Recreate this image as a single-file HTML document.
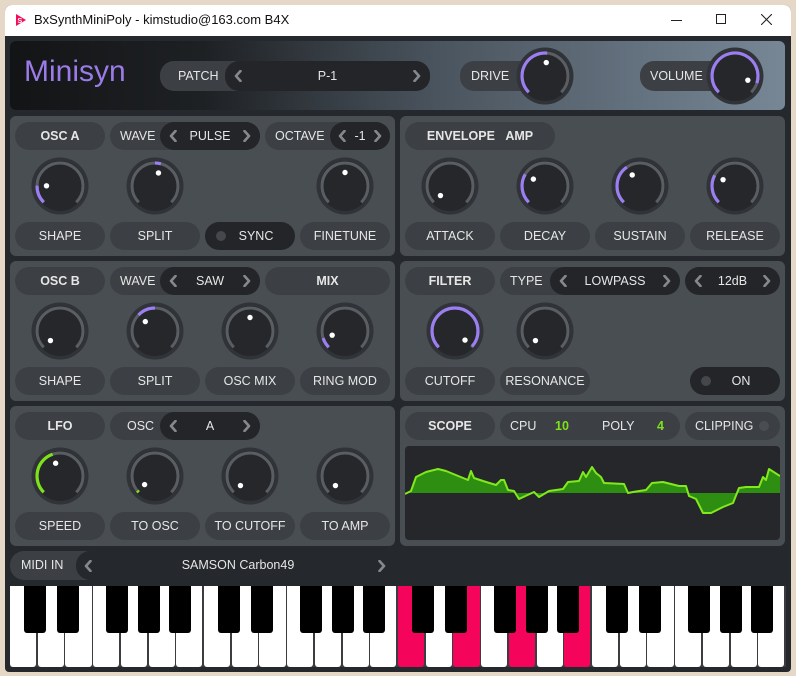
<!DOCTYPE html>
<html><head><meta charset="utf-8"><style>
*{margin:0;padding:0;box-sizing:border-box}
body{width:796px;height:676px;background:#e6d8c6;position:relative;overflow:hidden;font-family:"Liberation Sans",sans-serif;color:#e8e8e8}
.abs{position:absolute}
.win{left:5px;top:5px;width:786px;height:667px;background:#25282c;border-radius:7px 7px 4px 4px;overflow:hidden}
.title{left:5px;top:5px;width:786px;height:31px;background:#fff;border-radius:7px 7px 0 0;color:#111;font-size:13px}
.panel{background:#494e52;border-radius:6px}
.pill{position:absolute;height:28px;border-radius:14px;background:#3c4044;font-size:12.5px;line-height:28px;text-align:center;color:#e6e6e6}
.dark{background:#232529}
.b{font-weight:bold}
.chev{position:absolute;top:50%;margin-top:-6px;width:8px;height:12px;font-size:0;line-height:0}
.chev svg{display:block}
</style></head><body>
<div class="abs win"></div>
<div class="abs title">
  <svg class="abs" style="left:10px;top:8px" width="12" height="14"><path d="M1 1 L11 7 L1 13Z" fill="#f0105a"/><text x="2.5" y="10" font-size="7" fill="#fff" font-family="Liberation Sans" font-weight="bold">S</text></svg>
  <div class="abs" style="left:29px;top:7px">BxSynthMiniPoly - kimstudio@163.com B4X</div>
  <div class="abs" style="left:666px;top:15px;width:11px;height:1px;background:#222"></div>
  <div class="abs" style="left:711px;top:9px;width:10px;height:10px;border:1px solid #222"></div>
  <svg class="abs" style="left:756px;top:9px" width="11" height="11"><path d="M0 0L11 11M11 0L0 11" stroke="#222" stroke-width="1.1"/></svg>
</div>
<div class="abs" style="left:10px;top:41px;width:775px;height:69px;border-radius:6px;background:linear-gradient(90deg,#131416 0%,#1e2124 25%,#4a545e 55%,#778796 100%)"></div>
<div class="abs" style="left:24px;top:55px;font-size:30px;color:#9b7be8">Minisyn</div>
<div class="pill" style="left:160px;top:61px;width:270px;height:30px;line-height:30px;text-align:left;padding-left:18px">PATCH</div>
<div class="pill dark" style="left:225px;top:61px;width:205px;height:30px;line-height:30px">P-1<span class="chev L" style="left:9px"></span><span class="chev R" style="right:9px"></span></div>
<div class="pill" style="left:460px;top:61px;width:80px;height:30px;line-height:30px;text-align:left;padding-left:11px">DRIVE</div>
<div class="pill" style="left:640px;top:61px;width:90px;height:30px;line-height:30px;text-align:left;padding-left:10px">VOLUME</div>

<div class="abs panel" style="left:10px;top:116px;width:385px;height:140px"></div>
<div class="abs panel" style="left:400px;top:116px;width:385px;height:140px"></div>
<div class="abs panel" style="left:10px;top:261px;width:385px;height:140px"></div>
<div class="abs panel" style="left:400px;top:261px;width:385px;height:140px"></div>
<div class="abs panel" style="left:10px;top:406px;width:385px;height:140px"></div>
<div class="abs panel" style="left:400px;top:406px;width:385px;height:140px"></div>

<div class="pill b" style="left:15px;top:122px;width:90px">OSC A</div>
<div class="pill" style="left:110px;top:122px;width:150px;text-align:left;padding-left:10px">WAVE</div>
<div class="pill dark" style="left:160px;top:122px;width:100px">PULSE<span class="chev L" style="left:9px"></span><span class="chev R" style="right:9px"></span></div>
<div class="pill" style="left:265px;top:122px;width:125px;text-align:left;padding-left:10px">OCTAVE</div>
<div class="pill dark" style="left:330px;top:122px;width:60px">-1<span class="chev L" style="left:8px"></span><span class="chev R" style="right:8px"></span></div>
<div class="pill" style="left:15px;top:222px;width:90px">SHAPE</div>
<div class="pill" style="left:110px;top:222px;width:90px">SPLIT</div>
<div class="pill dark" style="left:205px;top:222px;width:90px;padding-left:12px">SYNC<span class="abs" style="left:11px;top:9px;width:10px;height:10px;border-radius:5px;background:#44484c"></span></div>
<div class="pill" style="left:300px;top:222px;width:90px">FINETUNE</div>

<div class="pill b" style="left:405px;top:122px;width:150px">ENVELOPE&nbsp;&nbsp;&nbsp;AMP</div>
<div class="pill" style="left:405px;top:222px;width:90px">ATTACK</div>
<div class="pill" style="left:500px;top:222px;width:90px">DECAY</div>
<div class="pill" style="left:595px;top:222px;width:90px">SUSTAIN</div>
<div class="pill" style="left:690px;top:222px;width:90px">RELEASE</div>

<div class="pill b" style="left:15px;top:267px;width:90px">OSC B</div>
<div class="pill" style="left:110px;top:267px;width:150px;text-align:left;padding-left:10px">WAVE</div>
<div class="pill dark" style="left:160px;top:267px;width:100px">SAW<span class="chev L" style="left:9px"></span><span class="chev R" style="right:9px"></span></div>
<div class="pill b" style="left:265px;top:267px;width:125px">MIX</div>
<div class="pill" style="left:15px;top:367px;width:90px">SHAPE</div>
<div class="pill" style="left:110px;top:367px;width:90px">SPLIT</div>
<div class="pill" style="left:205px;top:367px;width:90px">OSC MIX</div>
<div class="pill" style="left:300px;top:367px;width:90px">RING MOD</div>

<div class="pill b" style="left:405px;top:267px;width:90px">FILTER</div>
<div class="pill" style="left:500px;top:267px;width:180px;text-align:left;padding-left:10px">TYPE</div>
<div class="pill dark" style="left:550px;top:267px;width:130px">LOWPASS<span class="chev L" style="left:9px"></span><span class="chev R" style="right:9px"></span></div>
<div class="pill dark" style="left:685px;top:267px;width:95px">12dB<span class="chev L" style="left:9px"></span><span class="chev R" style="right:9px"></span></div>
<div class="pill" style="left:405px;top:367px;width:90px">CUTOFF</div>
<div class="pill" style="left:500px;top:367px;width:90px">RESONANCE</div>
<div class="pill dark" style="left:690px;top:367px;width:90px;padding-left:12px">ON<span class="abs" style="left:11px;top:9px;width:10px;height:10px;border-radius:5px;background:#44484c"></span></div>

<div class="pill b" style="left:15px;top:412px;width:90px">LFO</div>
<div class="pill" style="left:110px;top:412px;width:150px;text-align:left;padding-left:17px">OSC</div>
<div class="pill dark" style="left:160px;top:412px;width:100px">A<span class="chev L" style="left:9px"></span><span class="chev R" style="right:9px"></span></div>
<div class="pill" style="left:15px;top:512px;width:90px">SPEED</div>
<div class="pill" style="left:110px;top:512px;width:90px">TO OSC</div>
<div class="pill" style="left:205px;top:512px;width:90px">TO CUTOFF</div>
<div class="pill" style="left:300px;top:512px;width:90px">TO AMP</div>

<div class="pill b" style="left:405px;top:412px;width:90px">SCOPE</div>
<div class="pill" style="left:500px;top:412px;width:180px;text-align:left"><span class="abs" style="left:10px">CPU</span><span class="abs b" style="left:55px;color:#7ee21a">10</span><span class="abs" style="left:102px">POLY</span><span class="abs b" style="left:157px;color:#7ee21a">4</span></div>
<div class="pill" style="left:685px;top:412px;width:95px;text-align:left;padding-left:10px">CLIPPING<span class="abs" style="left:74px;top:9px;width:10px;height:10px;border-radius:5px;background:#4a4e52"></span></div>
<svg class="abs" style="left:405px;top:446px" width="375" height="94">
<rect width="375" height="94" rx="4" fill="#25272b"/>
<path d="M0 47 L0 48 L6 45 L11 31 L21 26 L33 23 L41 25 L63 34 L66 25 L69 32 L78 35 L91 39 L96 34 L99 34 L103 44 L109 45 L112 47 L114 53 L129 46 L134 51 L144 45 L158 43 L163 36 L174 35 L178 26 L181 31 L187 21 L191 27 L196 31 L199 37 L219 38 L223 47 L228 46 L241 44 L247 37 L258 36 L274 40 L281 40 L284 50 L291 53 L298 67 L306 67 L318 61 L328 57 L334 42 L341 41 L354 41 L358 31 L361 34 L364 23 L375 30 L375 47Z" fill="#2e8e12"/>
<path d="M0 48 L6 45 L11 31 L21 26 L33 23 L41 25 L63 34 L66 25 L69 32 L78 35 L91 39 L96 34 L99 34 L103 44 L109 45 L114 53 L129 46 L134 51 L144 45 L158 43 L163 36 L174 35 L178 26 L181 31 L187 21 L191 27 L196 31 L199 37 L219 38 L223 47 L228 46 L241 44 L247 37 L258 36 L274 40 L281 40 L284 50 L291 53 L298 67 L306 67 L318 61 L328 57 L334 42 L341 41 L354 41 L358 31 L361 34 L364 23 L375 30" fill="none" stroke="#80ea1c" stroke-width="2" stroke-linejoin="round"/>
</svg>

<div class="pill" style="left:10px;top:551px;width:90px;height:29px;line-height:29px;text-align:left;padding-left:11px">MIDI IN</div>
<div class="abs" style="left:76px;top:551px;width:320px;height:29px;border-radius:14px;background:#25282c;font-size:12.5px;line-height:29px;text-align:center;color:#e6e6e6;padding-left:4px">SAMSON Carbon49<span class="chev L" style="left:8px"></span><span class="chev R" style="right:10px"></span></div>

<svg id="knobs" class="abs" style="left:0;top:0" width="796" height="676"></svg>
<div id="kb" class="abs" style="left:10px;top:586px;width:776px;height:81px;background:#3a3c40"></div>

<script>
document.querySelectorAll('.chev').forEach(function(e){e.innerHTML='<svg width="8" height="12"><path d="'+(e.classList.contains('L')?'M6.5 1 L2 6 L6.5 11':'M1.5 1 L6 6 L1.5 11')+'" fill="none" stroke="#85888c" stroke-width="2.6" stroke-linecap="round" stroke-linejoin="round"/></svg>';});
var s=document.getElementById('knobs'),h='';
function pt(cx,cy,r,a){a=a*Math.PI/180;return [cx+r*Math.sin(a),cy-r*Math.cos(a)];}
function arc(cx,cy,r,a0,a1,c,w){if(Math.abs(a1-a0)<0.5)return '';if(a1<a0){var t=a0;a0=a1;a1=t;}var p=pt(cx,cy,r,a0),q=pt(cx,cy,r,a1);return '<path d="M'+p[0].toFixed(2)+' '+p[1].toFixed(2)+' A'+r+' '+r+' 0 '+(a1-a0>180?1:0)+' 1 '+q[0].toFixed(2)+' '+q[1].toFixed(2)+'" fill="none" stroke="'+c+'" stroke-width="'+w+'"/>';}
function knob(cx,cy,t,bip,col){col=col||'#9b7ef0';var a=-135+270*t;
h+='<circle cx="'+cx+'" cy="'+cy+'" r="28.5" fill="#303337"/>';
h+='<circle cx="'+cx+'" cy="'+cy+'" r="25" fill="#25272b"/>';
h+=arc(cx,cy,23,-135,135,'#5a5e62',3);
h+=arc(cx,cy,23,bip?0:-135,a,col,3.2);
var d=pt(cx,cy,13.5,a);h+='<circle cx="'+d[0].toFixed(2)+'" cy="'+d[1].toFixed(2)+'" r="2.7" fill="#fff"/>';}
knob(545,76,0.52);knob(735,76,0.9);
knob(60,186,0.17);knob(155,186,0.555,1);knob(345,186,0.5,1);
knob(450,186,0);knob(545,186,0.28);knob(640,186,0.37);knob(735,186,0.27);
knob(60,331,0);knob(155,331,0.33,1);knob(250,331,0.5,1);knob(345,331,0.1);
knob(455,331,0.99);knob(545,331,0);
knob(60,476,0.43,0,'#7ee21a');knob(155,476,0.02,0,'#7ee21a');knob(250,476,0);knob(345,476,0);
s.innerHTML=h;
var kb=document.getElementById('kb'),k='',W=776/28,red={14:1,16:1,18:1,20:1};
for(var i=0;i<28;i++){k+='<div style="position:absolute;left:'+(i*W).toFixed(2)+'px;top:0;width:'+(W-1.5).toFixed(2)+'px;height:81px;background:'+(red[i]?'#f4045a':'#fff')+';border-radius:0 0 3px 3px"></div>';}
var bl=[0,1,3,4,5];
for(var o=0;o<4;o++)for(var j=0;j<5;j++){var w=bl[j];var x=(o*7+w+1)*W-11+(j<2?(j==0?-2.5:2.5):(j==2?-4:(j==4?4:0)));k+='<div style="position:absolute;left:'+x.toFixed(2)+'px;top:0;width:22px;height:47px;background:#000;border-radius:0 0 3px 3px"></div>';}
kb.innerHTML=k;
</script>
</body></html>
